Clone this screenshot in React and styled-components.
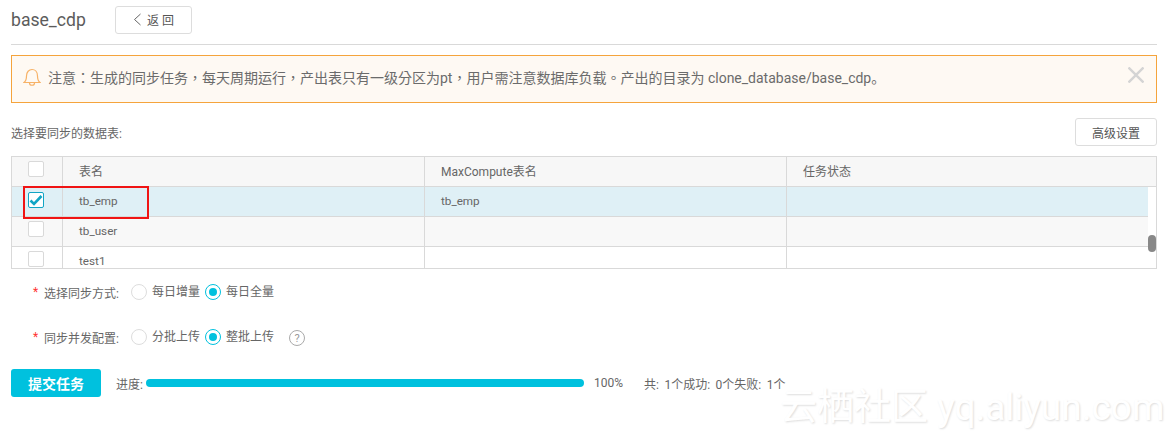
import React from "react";
import styled, { createGlobalStyle } from "styled-components";

const fontStack = `Roboto, "Noto Sans CJK SC", sans-serif`;

const GlobalStyle = createGlobalStyle`
  html, body {
    margin: 0;
    padding: 0;
    background: #fff;
    font-family: ${fontStack};
    color: #666;
  }
  * { box-sizing: border-box; }
`;

const Page = styled.div`
  position: relative;
  width: 1176px;
  height: 439px;
  padding: 6px 19px 0 11px;
  overflow: hidden;
`;

const Header = styled.div`
  display: flex;
  align-items: center;
  height: 39px;
  padding-bottom: 11px;
  border-bottom: 1px solid #d9d9d9;
`;

const Title = styled.h1`
  margin: 0 29px 0 0;
  width: 75px;
  font-size: 17.6px;
  font-weight: 400;
  color: #5c5c5c;
`;

const Button = styled.button`
  display: inline-flex;
  align-items: center;
  justify-content: center;
  gap: 5px;
  height: 28px;
  width: ${(p) => p.$width}px;
  padding: 0;
  background: #fff;
  border: 1px solid #ddd;
  border-radius: 3px;
  font-family: ${fontStack};
  font-size: 12px;
  color: #555;
`;

const Alert = styled.div`
  display: flex;
  align-items: center;
  height: 48px;
  margin-top: 10px;
  padding: 0 12px 4px 11px;
  background: #fef9f3;
  border: 1px solid #f5a43c;
  font-family: Roboto, "Noto Sans CJK TC", sans-serif;
  font-size: 14px;
  color: #6b6b6b;
`;

const AlertText = styled.span`
  flex: 1;
  margin-left: 7px;
  white-space: nowrap;
`;

const FullStop = styled.span`
  font-family: "Noto Sans CJK SC", sans-serif;
`;

const CloseWrap = styled.span`
  display: flex;
  margin-bottom: 4px;
`;

const Toolbar = styled.div`
  display: flex;
  align-items: center;
  justify-content: space-between;
  margin-top: 15px;
  font-size: 12px;
  color: #666;
`;

const Table = styled.div`
  position: relative;
  height: 113px;
  margin-top: 10px;
  border: 1px solid #d9d9d9;
  overflow: hidden;
`;

const Row = styled.div`
  display: grid;
  grid-template-columns: 50px 362px 362px 362px;
  width: ${(p) => (p.$head ? "100%" : "1136px")};
  height: 30px;
  border-bottom: 1px solid #d9d9d9;
  background: ${(p) => p.$bg};
  font-size: ${(p) => (p.$head ? 12 : 11.7)}px;
  color: #666;
`;

const Cell = styled.div`
  display: flex;
  align-items: center;
  padding-left: 16px;
  padding-bottom: 1px;
  border-left: 1px solid #d9d9d9;
`;

const HeadCell = styled(Cell)`
  padding-bottom: 2px;
`;

const CheckCell = styled.div`
  display: flex;
  justify-content: center;
  padding-top: ${(p) => p.$top}px;
  padding-right: 2px;
`;

const Check = styled.span`
  display: flex;
  align-items: center;
  justify-content: center;
  width: 16px;
  height: 16px;
  background: #fff;
  border: 1px solid ${(p) => (p.$on ? "#12a5c5" : "#d9d9d9")};
  border-radius: 2px;
  color: #12a5c5;
`;

const Thumb = styled.div`
  position: absolute;
  right: 0;
  top: 78px;
  width: 8px;
  height: 17px;
  background: #888;
  border-radius: 4px;
`;

const Highlight = styled.div`
  position: absolute;
  left: 23px;
  top: 186px;
  width: 126px;
  height: 33px;
  border: 2px solid #f01414;
`;

const FormRow = styled.div`
  display: flex;
  align-items: center;
  height: 20px;
  margin-top: ${(p) => p.$top}px;
  padding-left: 22px;
  font-size: 12px;
  color: #666;
`;

const Required = styled.span`
  width: 11px;
  color: #f33;
  font-size: 12px;
`;

const FieldLabel = styled.span`
  width: 87px;
  padding-top: 1px;
`;

const RadioGroup = styled.label`
  display: flex;
  align-items: center;
  gap: 5px;
  margin-right: 5px;
`;

const RadioText = styled.span`
  position: relative;
  top: -2px;
`;

const Radio = styled.span`
  display: flex;
  align-items: center;
  justify-content: center;
  width: 16px;
  height: 16px;
  border-radius: 50%;
  border: 1px solid ${(p) => (p.$on ? "#00c1de" : "#ddd")};
  &::after {
    content: "";
    display: ${(p) => (p.$on ? "block" : "none")};
    width: 8px;
    height: 8px;
    border-radius: 50%;
    background: #00c1de;
  }
`;

const Help = styled.span`
  display: flex;
  align-items: center;
  justify-content: center;
  width: 16px;
  height: 16px;
  margin-left: 10px;
  margin-top: 2px;
  border: 1px solid #aaa;
  border-radius: 50%;
  color: #999;
  font-size: 11px;
`;

const Footer = styled.div`
  display: flex;
  align-items: center;
  margin-top: 22px;
  font-size: 12px;
  color: #666;
`;

const Submit = styled.button`
  width: 90px;
  height: 28px;
  padding: 0;
  background: #00c1de;
  border: 0;
  border-radius: 3px;
  color: #fff;
  font-family: ${fontStack};
  font-size: 14px;
  font-weight: 700;
`;

const ProgressLabel = styled.span`
  margin-left: 15px;
  width: 30px;
`;

const Progress = styled.div`
  width: 438px;
  height: 8px;
  border-radius: 4px;
  background: #00c1de;
`;

const Percent = styled.span`
  margin-left: 10px;
  width: 50px;
`;

const Stat = styled.span`
  margin-right: 5.5px;
`;

const Watermark = styled.div`
  position: absolute;
  left: 780px;
  top: 393px;
  font-size: 37px;
  line-height: 30px;
  color: #fff;
  text-shadow: 1px 1px 2px #dedede;
  white-space: nowrap;
`;

const Tick = () => (
  <svg width="14" height="12" viewBox="0 0 14 12">
    <path d="M1.5 6.5 L5 10 L12.5 2" fill="none" stroke="currentColor" strokeWidth="2.6" />
  </svg>
);

const Bell = () => (
  <svg width="18" height="19" viewBox="0 0 18 19" fill="none" stroke="#f7b267" strokeWidth="1.2">
    <path d="M1 14.5 C3 13 3.5 11 3.5 8 C3.5 4 6 1.5 9 1.5 C12 1.5 14.5 4 14.5 8 C14.5 11 15 13 17 14.5 Z" />
    <path d="M6.5 15 C6.5 18 11.5 18 11.5 15" />
  </svg>
);

const Close = () => (
  <svg width="16" height="16" viewBox="0 0 16 16">
    <path d="M0.5 0.5 L15.5 15.5 M15.5 0.5 L0.5 15.5" stroke="#d4d4d4" strokeWidth="2.4" />
  </svg>
);

const Chevron = () => (
  <svg width="9" height="13" viewBox="0 0 9 13">
    <path d="M7.5 1 L1.5 6.5 L7.5 12" fill="none" stroke="#666" strokeWidth="1" />
  </svg>
);

const rows = [
  { name: "tb_emp", target: "tb_emp", bg: "#dff0f6", on: true, top: 5 },
  { name: "tb_user", target: "", bg: "#f8f8f8", top: 4 },
  { name: "test1", target: "", bg: "#fff", top: 4 },
];

const App = () => {
  return (
    <Page>
      <GlobalStyle />
      <Header>
        <Title>base_cdp</Title>
        <Button $width={77}>
          <Chevron />
          返 回
        </Button>
      </Header>

      <Alert>
        <Bell />
        <AlertText>
          注意：生成的同步任务，每天周期运行，产出表只有一级分区为pt，用户需注意数据库负载。产出的目录为 clone_database/base_cdp<FullStop>。</FullStop>
        </AlertText>
        <CloseWrap>
          <Close />
        </CloseWrap>
      </Alert>

      <Toolbar>
        <span>选择要同步的数据表:</span>
        <Button $width={82}>高级设置</Button>
      </Toolbar>

      <Table>
        <Row $head $bg="#f7f7f7">
          <CheckCell $top={4}>
            <Check />
          </CheckCell>
          <HeadCell>表名</HeadCell>
          <HeadCell>MaxCompute表名</HeadCell>
          <HeadCell>任务状态</HeadCell>
        </Row>
        {rows.map((row) => (
          <Row key={row.name} $bg={row.bg}>
            <CheckCell $top={row.top}>
              <Check $on={row.on}>{row.on && <Tick />}</Check>
            </CheckCell>
            <Cell>{row.name}</Cell>
            <Cell>{row.target}</Cell>
            <Cell />
          </Row>
        ))}
        <Thumb />
      </Table>

      <FormRow $top={13}>
        <Required>*</Required>
        <FieldLabel>选择同步方式:</FieldLabel>
        <RadioGroup>
          <Radio />
          <RadioText>每日增量</RadioText>
        </RadioGroup>
        <RadioGroup>
          <Radio $on />
          <RadioText>每日全量</RadioText>
        </RadioGroup>
      </FormRow>

      <FormRow $top={25}>
        <Required>*</Required>
        <FieldLabel>同步并发配置:</FieldLabel>
        <RadioGroup>
          <Radio />
          <RadioText>分批上传</RadioText>
        </RadioGroup>
        <RadioGroup>
          <Radio $on />
          <RadioText>整批上传</RadioText>
        </RadioGroup>
        <Help>?</Help>
      </FormRow>

      <Footer>
        <Submit>提交任务</Submit>
        <ProgressLabel>进度:</ProgressLabel>
        <Progress />
        <Percent>100%</Percent>
        <Stat>共:</Stat>
        <Stat>1个成功:</Stat>
        <Stat>0个失败:</Stat>
        <Stat>1个</Stat>
      </Footer>

      <Highlight />
      <Watermark>云栖社区 yq.aliyun.com</Watermark>
    </Page>
  );
};

export default App;
